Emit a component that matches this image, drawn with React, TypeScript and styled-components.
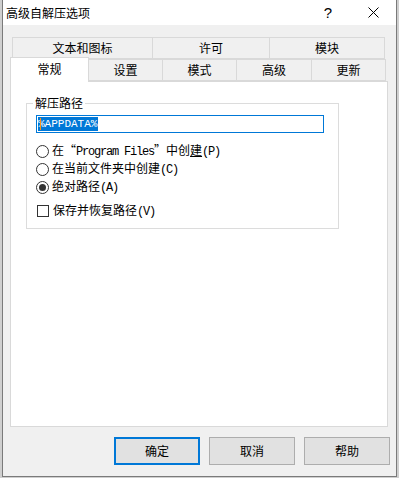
import React from "react";
import styled, { createGlobalStyle } from "styled-components";

const GlobalStyle = createGlobalStyle`
  html, body {
    margin: 0;
    padding: 0;
    background: #cfcfcf;
  }
  body {
    font-family: "Noto Sans CJK SC", "Noto Sans", sans-serif;
    font-size: 12px;
    color: #000;
  }
`;

const Window = styled.div`
  margin-left: 2px;
  width: 393px;
  height: 476px;
  background: #f0f0f0;
  border: 1px solid #7a7a7a;
  border-top: none;
  display: flex;
  flex-direction: column;
`;

const TitleBar = styled.div`
  height: 25px;
  background: #fff;
  display: flex;
  align-items: center;
  padding-left: 3px;
`;

const Title = styled.span`
  flex: 1;
  font-size: 12px;
  line-height: 16px;
`;

const TitleButton = styled.div<{ $w: number }>`
  width: ${({ $w }) => $w}px;
  height: 25px;
  display: flex;
  align-items: center;
  justify-content: center;
  font-family: "Liberation Sans", sans-serif;
  font-size: 14px;
`;

const Body = styled.div`
  padding: 12px 8px 0 7px;
  display: flex;
  flex-direction: column;
`;

const TabRow = styled.div<{ $inset: number; $h: number }>`
  display: flex;
  align-items: flex-end;
  margin-left: ${({ $inset }) => $inset}px;
  height: ${({ $h }) => $h}px;
`;

const Tab = styled.div<{ $w: number; $active?: boolean }>`
  box-sizing: border-box;
  width: ${({ $w }) => $w}px;
  height: ${({ $active }) => ($active ? 25 : 22)}px;
  margin-right: -1px;
  border: 1px solid #d9d9d9;
  border-bottom: ${({ $active }) => ($active ? "none" : "1px solid #d9d9d9")};
  background: ${({ $active }) => ($active ? "#fff" : "#f0f0f0")};
  display: flex;
  justify-content: center;
  align-items: ${({ $active }) => ($active ? "flex-start" : "center")};
  padding-top: ${({ $active }) => ($active ? 3 : 0)}px;
  line-height: 16px;
  position: relative;
  z-index: ${({ $active }) => ($active ? 2 : 0)};
  margin-bottom: ${({ $active }) => ($active ? -1 : 0)}px;
`;

const Panel = styled.div`
  box-sizing: border-box;
  width: 378px;
  height: 346px;
  background: #fff;
  border: 1px solid #d9d9d9;
  padding: 13px 0 0 15px;
`;

const GroupBox = styled.fieldset`
  box-sizing: border-box;
  width: 313px;
  height: 134px;
  margin: 0;
  padding: 4px 9px 8px 9px;
  border: 1px solid #dcdcdc;
  min-width: 0;
`;

const Legend = styled.legend`
  margin-left: -3px;
  padding: 0 2px;
  line-height: 16px;
  font-size: 12px;
`;

const PathInput = styled.div`
  box-sizing: border-box;
  width: 288px;
  height: 18px;
  border: 1px solid #0078d7;
  padding: 1px 0 0 1px;
  display: flex;
  align-items: flex-start;
`;

const Selected = styled.span`
  background: #0078d7;
  color: #fff;
  font-family: "Liberation Mono", monospace;
  font-size: 11px;
  line-height: 14px;
  height: 14px;
  padding-right: 1px;
  position: relative;
`;

const Caret = styled.span`
  position: absolute;
  left: 2px;
  top: 1px;
  width: 1px;
  height: 12px;
  background: #f7931e;
`;

const Options = styled.div`
  margin-top: 9px;
  display: flex;
  flex-direction: column;
`;

const OptionRow = styled.div<{ $gap?: number }>`
  height: 18px;
  display: flex;
  align-items: center;
  gap: 3px;
  margin-top: ${({ $gap }) => $gap ?? 0}px;
`;

const Radio = styled.span<{ $checked?: boolean }>`
  box-sizing: border-box;
  width: 13px;
  height: 13px;
  border: 1px solid #333;
  border-radius: 50%;
  display: flex;
  align-items: center;
  justify-content: center;
  background: #fff;
  &::after {
    content: "";
    width: 7px;
    height: 7px;
    border-radius: 50%;
    background: ${({ $checked }) => ($checked ? "#333" : "transparent")};
  }
`;

const Check = styled.span`
  box-sizing: border-box;
  width: 12px;
  height: 12px;
  margin: 0 1px 0 1px;
  border: 1px solid #333;
  background: #fff;
`;

const Label = styled.span`
  font-family: "Noto Sans CJK SC", sans-serif;
  font-size: 12px;
  line-height: 16px;
  white-space: nowrap;
`;

const Latin = styled.span`
  font-family: "Liberation Mono", monospace;
  font-size: 12px;
  letter-spacing: -1.2px;
`;

const Key = styled.span`
  text-decoration: underline;
  text-underline-offset: 1px;
`;

const ButtonRow = styled.div`
  display: flex;
  justify-content: flex-end;
  gap: 9px;
  margin: 10px -2px 0 0;
`;

const Button = styled.div<{ $default?: boolean }>`
  box-sizing: border-box;
  width: 86px;
  height: 28px;
  background: #e1e1e1;
  border: ${({ $default }) => ($default ? "2px solid #0078d7" : "1px solid #adadad")};
  display: flex;
  align-items: center;
  justify-content: center;
  line-height: 16px;
`;

const HelpIcon = () => (
  <span style={{ fontSize: 15 }}>?</span>
);

const CloseIcon = () => (
  <svg width="11" height="11" viewBox="0 0 11 11">
    <path d="M0.5 0.5 L10.5 10.5 M10.5 0.5 L0.5 10.5" stroke="#000" strokeWidth="1" fill="none" />
  </svg>
);

export default function App() {
  return (
    <>
      <GlobalStyle />
      <Window>
        <TitleBar>
          <Title>高级自解压选项</Title>
          <TitleButton $w={46}>
            <HelpIcon />
          </TitleButton>
          <TitleButton $w={45}>
            <CloseIcon />
          </TitleButton>
        </TitleBar>
        <Body>
          <TabRow $inset={2} $h={22}>
            <Tab $w={141}>文本和图标</Tab>
            <Tab $w={118}>许可</Tab>
            <Tab $w={116}>模块</Tab>
          </TabRow>
          <TabRow $inset={0} $h={22}>
            <Tab $w={79} $active>
              常规
            </Tab>
            <Tab $w={75}>设置</Tab>
            <Tab $w={75}>模式</Tab>
            <Tab $w={76}>高级</Tab>
            <Tab $w={75}>更新</Tab>
          </TabRow>
          <Panel>
            <GroupBox>
              <Legend>解压路径</Legend>
              <PathInput>
                <Selected>
                  %APPDATA%
                  <Caret />
                </Selected>
              </PathInput>
              <Options>
                <OptionRow>
                  <Radio />
                  <Label>
                    在“<Latin>Program Files</Latin>”中创<Key>建</Key>
                    <Latin>(P)</Latin>
                  </Label>
                </OptionRow>
                <OptionRow>
                  <Radio />
                  <Label>
                    在当前文件夹中创建<Latin>(C)</Latin>
                  </Label>
                </OptionRow>
                <OptionRow>
                  <Radio $checked />
                  <Label>
                    绝对路径<Latin>(A)</Latin>
                  </Label>
                </OptionRow>
                <OptionRow $gap={6}>
                  <Check />
                  <Label>
                    保存并恢复路径<Latin>(V)</Latin>
                  </Label>
                </OptionRow>
              </Options>
            </GroupBox>
          </Panel>
          <ButtonRow>
            <Button $default>确定</Button>
            <Button>取消</Button>
            <Button>帮助</Button>
          </ButtonRow>
        </Body>
      </Window>
    </>
  );
}
